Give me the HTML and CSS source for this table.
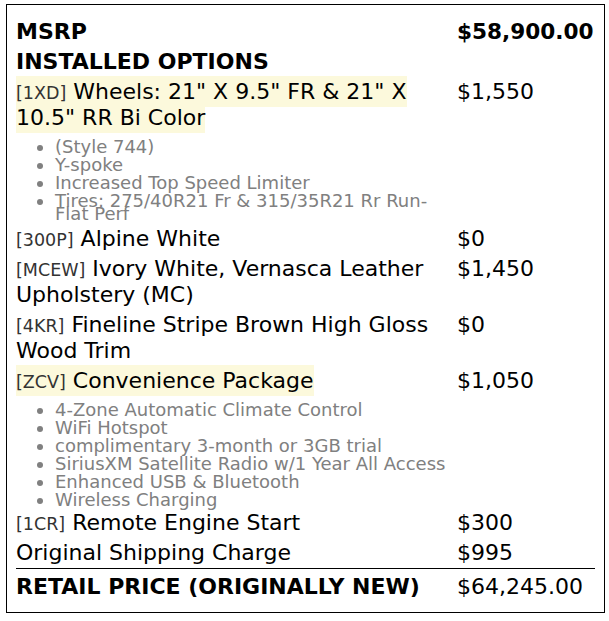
FILE: index.html
```html
<!DOCTYPE html>
<html lang="en">
<head>
<meta charset="utf-8">
<title>Window Sticker</title>
<link rel="stylesheet" href="styles.css">
</head>
<body>
<div class="sticker">
  <div class="row head">
    <div class="label">MSRP</div>
    <div class="price">$58,900.00</div>
  </div>
  <div class="row head">
    <div class="label">INSTALLED OPTIONS</div>
    <div class="price"></div>
  </div>
  <div class="row">
    <div class="label"><span class="hl"><span class="code">[1XD]</span> Wheels: 21" X 9.5" FR &amp; 21" X 10.5" RR Bi Color</span></div>
    <div class="price">$1,550</div>
  </div>
  <ul class="features">
    <li>(Style 744)</li>
    <li>Y-spoke</li>
    <li>Increased Top Speed Limiter</li>
    <li>Tires: 275/40R21 Fr &amp; 315/35R21 Rr Run-Flat Perf</li>
  </ul>
  <div class="row">
    <div class="label"><span class="code">[300P]</span> Alpine White</div>
    <div class="price">$0</div>
  </div>
  <div class="row">
    <div class="label"><span class="code">[MCEW]</span> Ivory White, Vernasca Leather Upholstery (MC)</div>
    <div class="price">$1,450</div>
  </div>
  <div class="row">
    <div class="label"><span class="code">[4KR]</span> Fineline Stripe Brown High Gloss Wood Trim</div>
    <div class="price">$0</div>
  </div>
  <div class="row">
    <div class="label"><span class="hl"><span class="code">[ZCV]</span> Convenience Package</span></div>
    <div class="price">$1,050</div>
  </div>
  <ul class="features features-tight">
    <li>4-Zone Automatic Climate Control</li>
    <li>WiFi Hotspot</li>
    <li>complimentary 3-month or 3GB trial</li>
    <li>SiriusXM Satellite Radio w/1 Year All Access</li>
    <li>Enhanced USB &amp; Bluetooth</li>
    <li>Wireless Charging</li>
  </ul>
  <div class="row">
    <div class="label"><span class="code">[1CR]</span> Remote Engine Start</div>
    <div class="price">$300</div>
  </div>
  <div class="row">
    <div class="label">Original Shipping Charge</div>
    <div class="price">$995</div>
  </div>
  <div class="row total">
    <div class="label">RETAIL PRICE (ORIGINALLY NEW)</div>
    <div class="price">$64,245.00</div>
  </div>
</div>
</body>
</html>
```
FILE: styles.css
```css
html, body {
  margin: 0;
  padding: 0;
  background: #ffffff;
}

body {
  padding: 4px 4px 0 6px;
  font-family: "DejaVu Sans", Verdana, sans-serif;
  color: #000000;
}

.sticker {
  width: 599px;
  box-sizing: border-box;
  border: 1px solid #000000;
  padding: 12px 9px 10px 9px;
}

.row {
  display: grid;
  grid-template-columns: 436px 1fr;
  column-gap: 5px;
  padding: 2px 0;
  font-size: 22px;
  line-height: 26px;
}

.head {
  font-weight: bold;
}

.head .price {
  font-weight: bold;
  font-size: 21.6px;
}

.code {
  font-size: 17.5px;
  line-height: 1;
  color: #333333;
}

.hl {
  background: #fcf9dc;
  padding: 3px 0;
}

.features {
  width: 436px;
  box-sizing: border-box;
  margin: 0;
  padding: 7px 0 4px 39px;
  font-size: 18px;
  line-height: 13px;
  color: #808080;
}

.features-tight {
  padding-bottom: 2px;
}

.features li {
  margin-bottom: 5px;
}

.features li:last-child {
  margin-bottom: 0;
}

.total {
  border-top: 1px solid #000000;
  padding-top: 5px;
  font-weight: bold;
}

.total .price {
  font-weight: normal;
}
```
